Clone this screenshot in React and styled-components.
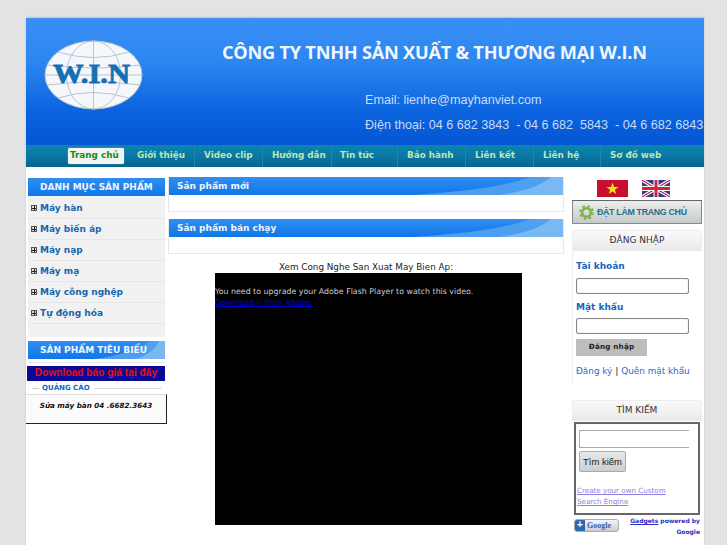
import React from "react";
import styled, { createGlobalStyle } from "styled-components";

const Global = createGlobalStyle`
  html, body { margin: 0; padding: 0; background: #e3e3e3; overflow: hidden; height: 545px; }
  body { font-family: "DejaVu Sans", Verdana, sans-serif; font-size: 10px; color: #222; }
`;
const Wrapper = styled.div`
  width: 678px; height: 527px; margin: 18px 0 0 26px; background: #fff; overflow: hidden;
  box-shadow: 0 -1px 2px #c4c4c4;
`;
const Header = styled.header`
  height: 127px; display: flex; background: linear-gradient(#3a8ff5 0%, #2b86f0 35%, #0a62de 75%, #0556d4 100%);
`;
const LogoBox = styled.div` width: 196px; padding: 22px 0 0 18px; box-sizing: border-box; `;
const HeadCol = styled.div` flex: 1; padding-top: 24px; white-space: nowrap; overflow: hidden; `;
const Company = styled.div`
  font: bold 18.2px "Open Sans", "Liberation Sans", sans-serif; color: #f1f6fc; line-height: 20px; letter-spacing: -.25px;
`;
const Contact = styled.div`
  font: 12.6px "Liberation Sans", Arial, sans-serif; color: #c9dcf4; margin: ${p => p.$top}px 0 0 ${p => p.$left}px; line-height: 14px; white-space: pre;
`;
const Nav = styled.nav`
  height: 22px; display: flex; padding-left: 42px; background: linear-gradient(#0b86ac, #0a77a4 50%, #066490);
`;
const NavItem = styled.a`
  width: ${p => p.$w}px; box-sizing: border-box; padding-left: ${p => p.$pad}px; font-weight: bold; font-size: 8.8px; line-height: 21px;
  color: #bfe6b2; border-right: 1px solid ${p => (p.$last ? "transparent" : "#1a86ab")}; white-space: nowrap;
`;
const ActiveNav = styled.a`
  display: block; width: 56px; height: 16px; margin: 3px 4px 0 0; border-radius: 2px; background: #f2f4f2; color: #148c14; font-weight: bold; font-size: 8.8px;
  line-height: 15px; padding-left: 2px; box-sizing: border-box; flex: none; box-shadow: 0 0 1px #fff; white-space: nowrap;
`;
const Body = styled.div` display: flex; padding: 10px 2px 0 2px; `;
const Left = styled.aside` width: 137px; flex: none; margin-right: 3px; padding-top: 1px; `;
const Center = styled.main` width: 396px; flex: none; margin-right: 8px; `;
const Right = styled.aside` width: 130px; flex: none; `;
const BlueTitle = styled.div`
  height: 18px; background: linear-gradient(#2f8ef2, #1076e8); color: #eef5fd; font-weight: bold; font-size: 9px; line-height: 18px;
  padding-left: ${p => p.$pad}px; position: relative; overflow: hidden; isolation: isolate; white-space: nowrap;
`;
const Curve = styled.svg` position: absolute; right: 0; top: 0; z-index: -1; `;
const Menu = styled.div` background: #f1f1f1; padding: 2px 0 13px; border-radius: 0 0 3px 3px; `;
const MenuRow = styled.div`
  height: 21px; box-sizing: border-box; border-bottom: 1px solid #e6e6e6; display: flex; align-items: center; padding-left: 3px; gap: 3px;
  color: #1666b0; font-weight: bold; font-size: 9px;
`;
const Plus = styled.span`
  width: 4px; height: 4px; border: 1px solid #555; background: #ddd; position: relative; flex: none;
  &::before { content: ""; position: absolute; left: 0; right: 0; top: 1.5px; height: 1px; background: #222; }
  &::after { content: ""; position: absolute; top: 0; bottom: 0; left: 1.5px; width: 1px; background: #222; }
`;
const Featured = styled.div` margin-top: 4px; border-bottom: 1px solid #e4e4e4; padding-bottom: 3px; `;
const Download = styled.div`
  margin: 3px 0 0 -1px; width: 138px; height: 15px; background: #0a0a96; color: #e4101a; font: bold 10.2px/14px "Liberation Sans", Arial, sans-serif; text-align: center; white-space: nowrap;
`;
const AdTitle = styled.div`
  display: flex; align-items: center; gap: 3px; margin: 1px 3px 0 4px; color: #1468c0; font-weight: bold; font-size: 7px; height: 12px;
  &::before { content: ""; width: 7px; height: 1px; background: #ccc; }
  &::after { content: ""; flex: 1; height: 1px; background: #ddd; margin-left: 1px; }
`;
const AdBox = styled.div`
  margin-left: -2px; width: 140px; height: 28px; border-right: 1px solid #222; border-bottom: 1px solid #222; border-top: 1px solid #ddd;
  font: italic bold 7.2px/21px "DejaVu Sans", sans-serif; color: #111; text-align: center; background: #fbfbfb; white-space: nowrap;
`;
const Panel = styled.section` margin-bottom: 7px; border: 1px solid #e8e8e8; border-top: 0; `;
const PanelBody = styled.div` height: 16px; background: #fff; `;
const VideoCaption = styled.div` text-align: center; font-size: 8.8px; line-height: 12px; color: #222; `;
const Video = styled.div`
  width: 307px; height: 252px; margin-left: 47px; background: #000; color: #ccc; font-size: 7.85px; line-height: 11px; padding-top: 13px; box-sizing: border-box;
`;
const VideoLink = styled.a` display: block; color: #0000cc; text-decoration: underline; `;
const Flags = styled.div` display: flex; gap: 14px; margin: 3px 0 3px; padding-left: 25px; `;
const SetHome = styled.div`
  height: 22px; border: 1px solid #888; border-top-color: #666; background: linear-gradient(#eceeee, #c6c9c9); display: flex; align-items: center; gap: 3px; padding-left: 6px;
  color: #25708c; font: bold 8.8px "Liberation Sans", Arial, sans-serif; letter-spacing: -.3px; white-space: nowrap;
`;
const BoxTitle = styled.div`
  height: 21px; background: linear-gradient(#fafafa, #e9e9e9); border-radius: 3px 3px 0 0; text-align: center; font-size: 9px; line-height: 19px; color: #333; border: 1px solid #eee; border-bottom: 0; box-sizing: border-box; margin-top: ${p => p.$top}px;
`;
const Login = styled.div` margin-top: 0; padding: 0 0 0 3px; border-left: 1px solid #f0f0f0; height: 135px; `;
const Label = styled.div` font-weight: bold; font-size: 9px; color: #1666c0; padding-top: ${p => p.$top}px; line-height: 12px; `;
const Field = styled.div` width: 111px; height: 14px; margin-top: ${p => p.$top}px; border: 1px solid #888; border-radius: 2px; background: #fff; box-shadow: inset 0 0 1px #aaa; `;
const LoginBtn = styled.div` width: 71px; height: 17px; margin-top: 5px; background: #bdbdbd; font-size: 7.2px; font-weight: bold; line-height: 16px; text-align: center; color: #222; letter-spacing: .2px; `;
const LoginLinks = styled.div` margin-top: 9px; font-size: 8.85px; color: #1a70c8; line-height: 12px; white-space: nowrap; & b { color: #555; } `;
const SearchBox = styled.div`
  margin: 1px 0 0 2px; width: 126px; height: 93px; border: 2px solid #666; box-sizing: border-box; padding: 6px 0 0 3px; background: #fff; overflow: hidden;
`;
const SearchInput = styled.div` width: 109px; height: 16px; border: 1px solid #aaa; border-right: 0; margin-bottom: 3px; `;
const SearchBtn = styled.div`
  width: 45px; height: 19px; border: 1px solid #aaa; border-radius: 2px; background: linear-gradient(#e6e8ea, #ccced0); font: 9.5px/19px "Liberation Sans", Arial, sans-serif; text-align: center; color: #222; margin-bottom: 13px;
`;
const CustomLink = styled.a` display: block; margin-left: -2px; color: #8d80e0; font-size: 7.15px; line-height: 11px; text-decoration: underline; white-space: nowrap; `;
const GadgetRow = styled.div` display: flex; margin: 0 2px 0 2px; align-items: flex-start; justify-content: space-between; `;
const AddGoogle = styled.div`
  width: 43px; height: 11px; border: 1px solid #aaa; border-radius: 3px; background: linear-gradient(#f4f6f8, #c8ccd0); display: flex; align-items: center; gap: 2px; font: bold 8px "Liberation Serif", serif; color: #3c5fb0; margin-top: 4px;
`;
const AddIcon = styled.span` width: 10px; height: 11px; background: #2a6ab0; color: #fff; font: bold 10px/10px "Liberation Sans", sans-serif; text-align: center; border-radius: 2px 0 0 2px; flex: none; `;
const GadgetText = styled.div` text-align: right; font-size: 6px; font-weight: bold; color: #3030c8; line-height: 11px; white-space: nowrap; & u { color: #3030c8; } `;
const GearWrap = styled.span` display: flex; flex: none; `;

const WaveTitle = ({ children, pad, w = 150 }) => (
  <BlueTitle $pad={pad}>
    {children}
    <Curve width={w} height="18" viewBox="0 0 150 18" preserveAspectRatio="none">
      <path d="M0 18 C45 15 90 10 118 0 L150 0 L150 18Z" fill="#5aa6ef" opacity=".8" />
      <path d="M85 18 C115 14 128 8 138 0 L150 0 L150 18Z" fill="#8cc3f2" opacity=".7" />
    </Curve>
  </BlueTitle>
);

const Logo = () => (
  <svg width="99" height="70" viewBox="0 0 99 70">
    <ellipse cx="49.5" cy="35" rx="48.5" ry="34" fill="#f4f8fc" />
    <g fill="none" stroke="#b9c4cc" strokeWidth="1">
      <ellipse cx="49.5" cy="35" rx="48.5" ry="34" />
      <ellipse cx="49.5" cy="35" rx="27" ry="34" />
      <line x1="49.5" y1="1" x2="49.5" y2="69" />
      <line x1="1" y1="35" x2="98" y2="35" />
      <path d="M14 12 Q49.5 23 85 12" />
      <path d="M14 58 Q49.5 47 85 58" />
      <path d="M3 25 Q49.5 31 96 25" />
      <path d="M3 45 Q49.5 39 96 45" />
    </g>
    <text x="9" y="43" textLength="77" lengthAdjust="spacingAndGlyphs" fontFamily="Liberation Serif, serif" fontWeight="bold" fontSize="27" fill="#1470b4" stroke="#1470b4" strokeWidth=".8">W.I.N</text>
  </svg>
);

const VnFlag = () => (
  <svg width="31" height="17" viewBox="0 0 31 17">
    <rect width="31" height="17" fill="#c8102e" />
    <polygon fill="#f6e017" points="15.5,2.5 17,7 21.5,7 17.9,9.8 19.2,14 15.5,11.4 11.8,14 13.1,9.8 9.5,7 14,7" />
  </svg>
);
const UkFlag = () => (
  <svg width="28" height="17" viewBox="0 0 28 17">
    <rect width="28" height="17" fill="#27408f" />
    <path d="M0 0L28 17M28 0L0 17" stroke="#fff" strokeWidth="3.4" />
    <path d="M0 0L28 17M28 0L0 17" stroke="#d2243c" strokeWidth="1.2" />
    <path d="M14 0V17M0 8.5H28" stroke="#fff" strokeWidth="5" />
    <path d="M14 0V17M0 8.5H28" stroke="#d2243c" strokeWidth="3" />
  </svg>
);
const Gear = () => (
  <GearWrap>
    <svg width="15" height="15" viewBox="0 0 16 16">
      <circle cx="8" cy="8" r="4.6" fill="none" stroke="#7cb63c" strokeWidth="2.6" />
      <circle cx="8" cy="8" r="6.8" fill="none" stroke="#7cb63c" strokeWidth="2.2" strokeDasharray="2.7 2.64" />
    </svg>
  </GearWrap>
);

const navItems = [
  ["Giới thiệu", 67, 9], ["Video clip", 68, 9], ["Hướng dẫn", 69, 9], ["Tin tức", 66, 8],
  ["Bảo hành", 68, 9], ["Liên kết", 68, 9], ["Liên hệ", 67, 9], ["Sơ đồ web", 68, 9],
];
const menu = ["Máy hàn", "Máy biến áp", "Máy nạp", "Máy mạ", "Máy công nghệp", "Tự động hóa"];

export default function App() {
  return (
    <>
      <Global />
      <Wrapper>
        <Header>
          <LogoBox><Logo /></LogoBox>
          <HeadCol>
            <Company>CÔNG TY TNHH SẢN XUẤT &amp; THƯƠNG MẠI W.I.N</Company>
            <Contact $top={31} $left={143}>Email: lienhe@mayhanviet.com</Contact>
            <Contact $top={11} $left={143}>Điện thoại: 04 6 682 3843  - 04 6 682  5843  - 04 6 682 6843</Contact>
          </HeadCol>
        </Header>
        <Nav>
          <ActiveNav>Trang chủ</ActiveNav>
          {navItems.map(([t, w, pad], i) => (
            <NavItem key={t} $w={w} $pad={pad} $last={i === navItems.length - 1}>{t}</NavItem>
          ))}
        </Nav>
        <Body>
          <Left>
            <BlueTitle $pad={12}>DANH MỤC SẢN PHẨM</BlueTitle>
            <Menu>
              {menu.map(m => <MenuRow key={m}><Plus />{m}</MenuRow>)}
            </Menu>
            <Featured><WaveTitle pad={12} w={70}>SẢN PHẨM TIÊU BIỂU</WaveTitle></Featured>
            <Download>Download báo giá tại đây</Download>
            <AdTitle>QUẢNG CÁO</AdTitle>
            <AdBox>Sửa máy bàn 04 .6682.3643</AdBox>
          </Left>
          <Center>
            <Panel><WaveTitle pad={8}>Sản phẩm mới</WaveTitle><PanelBody /></Panel>
            <Panel><WaveTitle pad={8}>Sản phẩm bán chạy</WaveTitle><PanelBody /></Panel>
            <VideoCaption>Xem Cong Nghe San Xuat May Bien Ap:</VideoCaption>
            <Video>
              You need to upgrade your Adobe Flash Player to watch this video.
              <VideoLink>Download it from Adobe.</VideoLink>
            </Video>
          </Center>
          <Right>
            <Flags><VnFlag /><UkFlag /></Flags>
            <SetHome><Gear />ĐẶT LÀM TRANG CHỦ</SetHome>
            <BoxTitle $top={6}>ĐĂNG NHẬP</BoxTitle>
            <Login>
              <Label $top={9}>Tài khoản</Label>
              <Field $top={6} />
              <Label $top={7}>Mật khẩu</Label>
              <Field $top={5} />
              <LoginBtn>Đăng nhập</LoginBtn>
              <LoginLinks>Đăng ký <b>|</b> Quên mật khẩu</LoginLinks>
            </Login>
            <BoxTitle $top={14}>TÌM KIẾM</BoxTitle>
            <SearchBox>
              <SearchInput />
              <SearchBtn>Tìm kiếm</SearchBtn>
              <CustomLink>Create your own Custom</CustomLink>
              <CustomLink>Search Engine</CustomLink>
            </SearchBox>
            <GadgetRow>
              <AddGoogle><AddIcon>+</AddIcon>Google</AddGoogle>
              <GadgetText><u>Gadgets</u> powered by<br />Google</GadgetText>
            </GadgetRow>
          </Right>
        </Body>
      </Wrapper>
    </>
  );
}
